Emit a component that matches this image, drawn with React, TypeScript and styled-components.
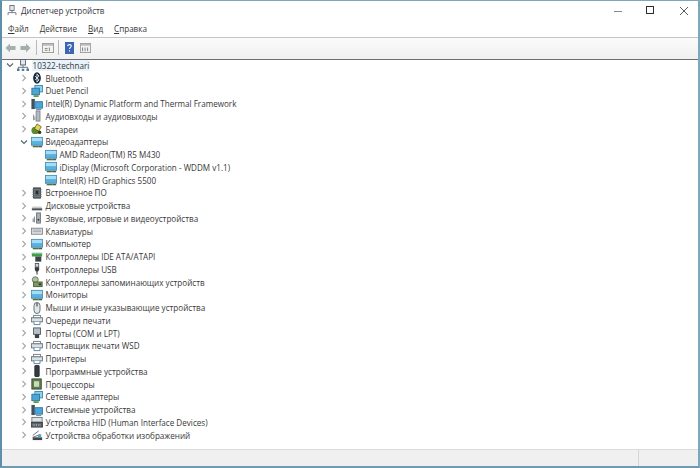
import React from 'react';
import styled, { createGlobalStyle } from 'styled-components';

const GlobalStyle = createGlobalStyle`
  html, body {
    margin: 0;
    padding: 0;
    background: #fff;
  }
  #root {
    width: 700px;
    height: 468px;
    overflow: hidden;
  }
`;

const Window = styled.div`
  width: 700px;
  height: 468px;
  box-sizing: border-box;
  display: flex;
  flex-direction: column;
  border-left: 2px solid #5f8fa8;
  border-right: 2px solid #7fa6bb;
  border-top: 1px solid #7fa6bb;
  border-bottom: 2px solid #6f9ab2;
  background: #fff;
  font-family: 'Open Sans', 'Liberation Sans', sans-serif;
  color: #383838;
  font-size: 8.1px;
`;

const TitleBar = styled.div`
  height: 17px;
  flex: none;
  display: flex;
  align-items: center;
  padding: 1px 0 0 5px;
  gap: 4px;
`;

const TitleText = styled.span`
  flex: 1;
`;

const WindowControls = styled.div`
  display: flex;
  margin-right: -2px;
`;

const ControlButton = styled.div`
  width: 33px;
  height: 17px;
  display: flex;
  align-items: center;
  justify-content: center;
`;

const MenuBar = styled.div`
  height: 18px;
  flex: none;
  display: flex;
  align-items: center;
  gap: 11px;
  padding-left: 6px;
  border-bottom: 1px solid #c4c4c4;
`;

const MenuItem = styled.span`
  &::first-letter {
    text-decoration: underline;
  }
`;

const ToolBar = styled.div`
  height: 19px;
  flex: none;
  display: flex;
  align-items: center;
  padding: 0 0 2px 3px;
  background: linear-gradient(#fbfbfb, #f0f0f0);
  border-bottom: 1px solid #6e6e6e;
`;

const ToolSeparator = styled.div<{ $after: number }>`
  width: 1px;
  height: 15px;
  background: #b9b9b9;
  margin: 0 ${p => p.$after}px 0 ${p => (p.$after === 5 ? 5 : 4)}px;
`;

const ToolGap = styled.div<{ $size: number }>`
  width: ${p => p.$size}px;
`;

const Tree = styled.div`
  flex: 1;
  margin-top: -1px;
`;

const Row = styled.div<{ $depth: number }>`
  height: 12.76px;
  display: flex;
  align-items: center;
  padding-left: ${p => p.$depth * 14}px;
  white-space: nowrap;
`;

const Chevron = styled.div`
  width: 15px;
  height: 12px;
  flex: none;
  display: flex;
  align-items: center;
  justify-content: center;
`;

const RowIcon = styled.div`
  width: 14.5px;
  height: 12px;
  flex: none;
  display: flex;
  align-items: center;
`;

const RowLabel = styled.span<{ $selected?: boolean }>`
  padding: 0 ${p => (p.$selected ? '1px' : '0')};
  background: ${p => (p.$selected ? '#e8f3fb' : 'transparent')};
`;

const StatusBar = styled.div`
  height: 16px;
  flex: none;
  display: flex;
  justify-content: flex-end;
  background: #f0f0f0;
  border-top: 1px solid #dcdcdc;
`;

const StatusCell = styled.div`
  width: 59px;
  border-left: 1px solid #d6d6d6;
`;

type Kind =
  | 'computer' | 'bluetooth' | 'network' | 'system' | 'audio' | 'battery'
  | 'monitor' | 'chip' | 'disk' | 'sound' | 'keyboard' | 'ide' | 'usb'
  | 'storage' | 'mouse' | 'printer' | 'port' | 'phone' | 'cpu' | 'hid' | 'camera';

const Screen = () => (
  <>
    <rect x="0.5" y="1.5" width="13" height="8.5" fill="#58b2e0" stroke="#4a88a8" strokeWidth="1" />
    <rect x="1" y="2" width="12" height="3.5" fill="#a6dcf4" />
  </>
);

const DeviceIcon: React.FC<{ kind: Kind }> = ({ kind }) => {
  const art: Record<Kind, React.ReactNode> = {
    computer: (
      <>
        <rect x="4" y="0.5" width="6" height="6" fill="#dfe7ee" stroke="#55606a" />
        <path d="M7 7v2M1.5 12v-3h11v3" fill="none" stroke="#55606a" />
        <rect x="0" y="10.5" width="3" height="2.5" fill="#4a7ea6" />
        <rect x="5.5" y="10.5" width="3" height="2.5" fill="#4a7ea6" />
        <rect x="11" y="10.5" width="3" height="2.5" fill="#4a7ea6" />
      </>
    ),
    bluetooth: (
      <>
        <ellipse cx="7" cy="6.5" rx="4.5" ry="6.3" fill="#16283c" />
        <path d="M4.8 4.5l4.6 4-2.4 2.5V2l2.4 2.5-4.6 4" fill="none" stroke="#fff" strokeWidth="0.9" />
      </>
    ),
    network: (
      <>
        <rect x="4.5" y="0.5" width="9" height="7" fill="#8fd0ef" stroke="#3b87ad" />
        <rect x="1" y="3.5" width="9" height="7" fill="#4aa6d8" stroke="#2f7498" />
        <path d="M3 12h6" stroke="#5f9e3a" strokeWidth="2" />
      </>
    ),
    system: (
      <>
        <rect x="0.5" y="1" width="4" height="11" fill="#42505c" />
        <rect x="4.5" y="4" width="9" height="7" fill="#4aa6d8" stroke="#34789c" />
        <path d="M6 12.5h6" stroke="#6d7a84" />
      </>
    ),
    audio: (
      <>
        <rect x="6" y="1" width="4.5" height="11" fill="#b4bbbf" stroke="#7a8287" />
        <path d="M3 5v6M4.5 7v4" stroke="#7a8287" />
      </>
    ),
    battery: (
      <>
        <ellipse cx="5" cy="8" rx="4.5" ry="4" fill="#5b8a2d" />
        <path d="M7 1l5 3-3 5-5-3z" fill="#e8d24a" stroke="#4e4e2e" strokeWidth="0.8" />
        <circle cx="10" cy="10" r="2" fill="#2f3d24" />
      </>
    ),
    monitor: (
      <>
        <Screen />
        <path d="M2 11.5h7" stroke="#5a6b35" strokeWidth="1.5" />
        <path d="M9 11.5h4" stroke="#4f5a60" strokeWidth="1.5" />
      </>
    ),
    chip: (
      <>
        <rect x="3" y="1" width="8" height="11" fill="#5d666b" stroke="#32393d" />
        <path d="M1 3h12M1 5.5h12M1 8h12M1 10.5h12" stroke="#7d868b" strokeWidth="0.8" />
        <rect x="5.5" y="4" width="3" height="4" fill="#262c30" />
      </>
    ),
    disk: (
      <>
        <path d="M2 7h10l1 2H1z" fill="#c7cbce" />
        <rect x="1" y="9" width="12" height="2.2" fill="#4b5257" />
      </>
    ),
    sound: (
      <>
        <rect x="6.5" y="1" width="4.5" height="11" fill="#a7afb4" stroke="#6a7277" />
        <path d="M4 5v6M2.5 7v4" stroke="#6a7277" />
        <circle cx="8.7" cy="8.5" r="1.2" fill="#444" />
      </>
    ),
    keyboard: (
      <>
        <rect x="0.5" y="3.5" width="13" height="6.5" fill="#e4e7e9" stroke="#7b8388" />
        <path d="M2 5.5h10M2 7.3h10" stroke="#949ca1" />
      </>
    ),
    ide: (
      <>
        <rect x="1" y="2" width="12" height="4" fill="#3d9a4a" />
        <rect x="1" y="2" width="12" height="1.4" fill="#7bc583" />
        <rect x="5" y="6" width="7" height="5.5" fill="#3c4348" />
      </>
    ),
    usb: (
      <>
        <rect x="5" y="0.5" width="4" height="4" fill="#cfd4d7" stroke="#52595e" />
        <path d="M4.5 4.5h5v3L8 9.5H6L4.5 7.5z" fill="#363c41" />
        <path d="M7 9.5v3" stroke="#363c41" strokeWidth="1.3" />
      </>
    ),
    storage: (
      <>
        <ellipse cx="5" cy="4" rx="3.5" ry="3.2" fill="#b0c2a2" stroke="#66745b" />
        <rect x="3" y="6.5" width="10" height="5" fill="#7d9a5f" stroke="#4c5c3c" />
        <rect x="9" y="8" width="3" height="2" fill="#2e3a28" />
      </>
    ),
    mouse: (
      <>
        <rect x="3.5" y="0.5" width="7" height="12" rx="3.5" fill="#e4e7ea" stroke="#59636a" />
        <path d="M7 1v4" stroke="#3c444a" strokeWidth="1.3" />
      </>
    ),
    printer: (
      <>
        <rect x="0.5" y="4" width="13" height="4.5" fill="#dbe0e3" stroke="#5f7480" />
        <rect x="3" y="1.5" width="8" height="2.5" fill="#fff" stroke="#6c7b84" />
        <path d="M3.5 8.5v3h7v-3" fill="#fff" stroke="#4a7c98" />
      </>
    ),
    port: (
      <>
        <rect x="3" y="1" width="8" height="7" fill="#b9c0c5" stroke="#50585d" />
        <path d="M4.5 8h5v4h-5z" fill="#3a4146" />
      </>
    ),
    phone: <rect x="4.5" y="0.5" width="5" height="12" rx="0.6" fill="#363c41" stroke="#22272b" />,
    cpu: (
      <>
        <rect x="1" y="1" width="11" height="11" fill="#5e7d4a" stroke="#39492e" />
        <rect x="3.5" y="3.5" width="6" height="6" fill="#cdd8c3" />
      </>
    ),
    hid: (
      <>
        <rect x="1" y="1.5" width="12" height="5" fill="#dde2e5" stroke="#6a7277" />
        <rect x="0.5" y="7" width="13" height="5" fill="#4f5a61" stroke="#3a4349" />
        <path d="M2 9h10M2 10.6h10" stroke="#c8ced2" strokeDasharray="1 1" />
      </>
    ),
    camera: (
      <>
        <path d="M2 7l7-5M2 9l9-3" stroke="#5a6267" fill="none" />
        <rect x="2" y="9" width="11" height="3" fill="#3f474c" />
        <rect x="8" y="6" width="4" height="3" fill="#5aa5cf" />
      </>
    ),
  };
  return (
    <svg width="12" height="12" viewBox="0 0 14 13" preserveAspectRatio="none">
      {art[kind]}
    </svg>
  );
};

const Caret: React.FC<{ open?: boolean }> = ({ open }) => (
  <svg width="8" height="8" viewBox="0 0 8 8">
    <path
      d={open ? 'M1 2.5L4 5.5L7 2.5' : 'M2.5 1L5.5 4L2.5 7'}
      fill="none"
      stroke={open ? '#55636c' : '#a6a6a6'}
      strokeWidth="1.1"
    />
  </svg>
);

type Item = { label: string; kind: Kind; depth: number; open?: boolean; leaf?: boolean; selected?: boolean };

const items: Item[] = [
  { label: '10322-technari', kind: 'computer', depth: 0, open: true, selected: true },
  { label: 'Bluetooth', kind: 'bluetooth', depth: 1 },
  { label: 'Duet Pencil', kind: 'network', depth: 1 },
  { label: 'Intel(R) Dynamic Platform and Thermal Framework', kind: 'system', depth: 1 },
  { label: 'Аудиовходы и аудиовыходы', kind: 'audio', depth: 1 },
  { label: 'Батареи', kind: 'battery', depth: 1 },
  { label: 'Видеоадаптеры', kind: 'monitor', depth: 1, open: true },
  { label: 'AMD Radeon(TM) R5 M430', kind: 'monitor', depth: 2, leaf: true },
  { label: 'iDisplay (Microsoft Corporation - WDDM v1.1)', kind: 'monitor', depth: 2, leaf: true },
  { label: 'Intel(R) HD Graphics 5500', kind: 'monitor', depth: 2, leaf: true },
  { label: 'Встроенное ПО', kind: 'chip', depth: 1 },
  { label: 'Дисковые устройства', kind: 'disk', depth: 1 },
  { label: 'Звуковые, игровые и видеоустройства', kind: 'sound', depth: 1 },
  { label: 'Клавиатуры', kind: 'keyboard', depth: 1 },
  { label: 'Компьютер', kind: 'monitor', depth: 1 },
  { label: 'Контроллеры IDE ATA/ATAPI', kind: 'ide', depth: 1 },
  { label: 'Контроллеры USB', kind: 'usb', depth: 1 },
  { label: 'Контроллеры запоминающих устройств', kind: 'storage', depth: 1 },
  { label: 'Мониторы', kind: 'monitor', depth: 1 },
  { label: 'Мыши и иные указывающие устройства', kind: 'mouse', depth: 1 },
  { label: 'Очереди печати', kind: 'printer', depth: 1 },
  { label: 'Порты (COM и LPT)', kind: 'port', depth: 1 },
  { label: 'Поставщик печати WSD', kind: 'printer', depth: 1 },
  { label: 'Принтеры', kind: 'printer', depth: 1 },
  { label: 'Программные устройства', kind: 'phone', depth: 1 },
  { label: 'Процессоры', kind: 'cpu', depth: 1 },
  { label: 'Сетевые адаптеры', kind: 'network', depth: 1 },
  { label: 'Системные устройства', kind: 'system', depth: 1 },
  { label: 'Устройства HID (Human Interface Devices)', kind: 'hid', depth: 1 },
  { label: 'Устройства обработки изображений', kind: 'camera', depth: 1 },
];

const PanelIcon: React.FC<{ variant: 'a' | 'b'; size: number }> = ({ variant, size }) => (
  <svg width={size} height="10" viewBox="0 0 13 11" preserveAspectRatio="none">
    <rect x="0.5" y="0.5" width="12" height="10" fill="#f4f4f4" stroke="#9a9a9a" />
    <rect x="1" y="1" width="11" height="2" fill="#b5bcc2" />
    {variant === 'a' ? (
      <path d="M3 6h3M3 8h3M8 5v4" stroke="#6f8a5f" />
    ) : (
      <path d="M3 5v4M6 5v4M9 5v4" stroke="#6b7278" />
    )}
  </svg>
);

const ArrowIcon: React.FC<{ dir: 'left' | 'right' }> = ({ dir }) => (
  <svg width="11" height="10" viewBox="0 0 12 10" preserveAspectRatio="none">
    <path
      d={dir === 'left' ? 'M0.5 5L5.5 0.5V3H11.5V7H5.5V9.5Z' : 'M11.5 5L6.5 0.5V3H0.5V7H6.5V9.5Z'}
      fill="#a4b0ac"
    />
  </svg>
);

const HelpIcon = () => (
  <svg width="9" height="12" viewBox="0 0 10 13" preserveAspectRatio="none">
    <rect x="0" y="0" width="10" height="13" fill="#3a66b4" />
    <path d="M3 4.2C3 2.4 7 2.4 7 4.4C7 5.8 5 5.8 5 7.6M5 9v1.4" fill="none" stroke="#fff" strokeWidth="1.2" />
  </svg>
);

const App: React.FC = () => (
  <>
    <GlobalStyle />
    <Window>
      <TitleBar>
        <svg width="10" height="11" viewBox="0 0 14 13" preserveAspectRatio="none">
          <rect x="4" y="0.5" width="6" height="6" fill="#dfe7ee" stroke="#55606a" />
          <path d="M7 7v2M1.5 12v-3h11v3" fill="none" stroke="#55606a" />
        </svg>
        <TitleText>Диспетчер устройств</TitleText>
        <WindowControls>
          <ControlButton>
            <svg width="10" height="10" viewBox="0 0 10 10">
              <path d="M1 5.5h8" stroke="#8a8a8a" />
            </svg>
          </ControlButton>
          <ControlButton>
            <svg width="9" height="9" viewBox="0 0 9 9">
              <rect x="0.5" y="0.5" width="7" height="7" fill="none" stroke="#2c2c2c" />
            </svg>
          </ControlButton>
          <ControlButton>
            <svg width="10" height="10" viewBox="0 0 10 10">
              <path d="M1 1l8 8M9 1l-8 8" stroke="#5a5a5a" />
            </svg>
          </ControlButton>
        </WindowControls>
      </TitleBar>
      <MenuBar>
        <MenuItem>Файл</MenuItem>
        <MenuItem>Действие</MenuItem>
        <MenuItem>Вид</MenuItem>
        <MenuItem>Справка</MenuItem>
      </MenuBar>
      <ToolBar>
        <ArrowIcon dir="left" />
        <ToolGap $size={4} />
        <ArrowIcon dir="right" />
        <ToolSeparator $after={5} />
        <PanelIcon variant="a" size={12} />
        <ToolSeparator $after={6} />
        <HelpIcon />
        <ToolGap $size={6} />
        <PanelIcon variant="b" size={11} />
      </ToolBar>
      <Tree>
        {items.map(item => (
          <Row key={item.label} $depth={item.depth}>
            <Chevron>{!item.leaf && <Caret open={item.open} />}</Chevron>
            <RowIcon>
              <DeviceIcon kind={item.kind} />
            </RowIcon>
            <RowLabel $selected={item.selected}>{item.label}</RowLabel>
          </Row>
        ))}
      </Tree>
      <StatusBar>
        <StatusCell />
      </StatusBar>
    </Window>
  </>
);

export default App;
